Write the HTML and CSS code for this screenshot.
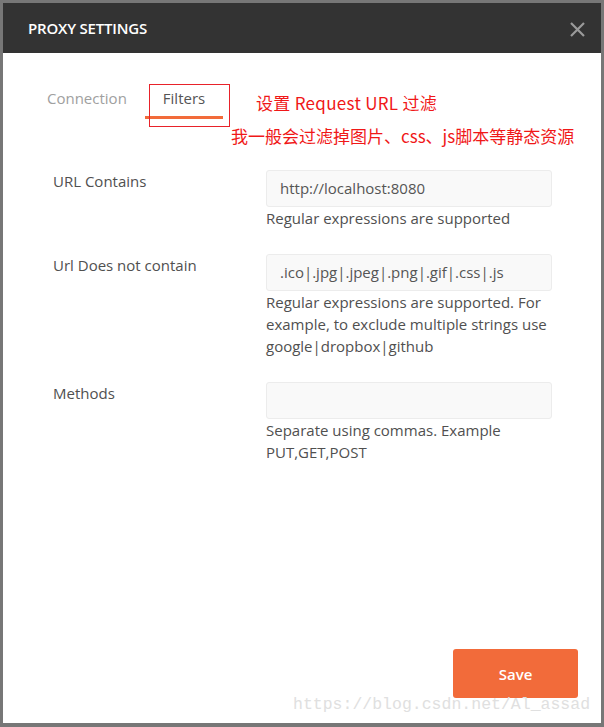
FILE: index.html
```html
<!DOCTYPE html>
<html lang="en">
<head>
    <meta charset="UTF-8">
    <title>Proxy Settings</title>
    <link rel="stylesheet" href="styles.css">
</head>
<body>
<div class="dialog">
    <header class="header">
        <span class="title">PROXY SETTINGS</span>
        <svg class="close" width="17" height="17" viewBox="0 0 17 17">
            <path d="M2 2 L15 15 M15 2 L2 15" stroke="#9a9a9a" stroke-width="2.2" fill="none"/>
        </svg>
    </header>

    <nav class="tabs">
        <div class="tab">Connection</div>
        <div class="tab active">Filters</div>
    </nav>

    <div class="form">
        <div class="label">URL Contains</div>
        <div class="field">
            <div class="input">http://localhost:8080</div>
            <div class="help">Regular expressions are supported</div>
        </div>

        <div class="label">Url Does not contain</div>
        <div class="field">
            <div class="input">.ico|.jpg|.jpeg|.png|.gif|.css|.js</div>
            <div class="help">Regular expressions are supported. For example, to exclude multiple strings use google|dropbox|github</div>
        </div>

        <div class="label">Methods</div>
        <div class="field">
            <div class="input"></div>
            <div class="help">Separate using commas. Example PUT,GET,POST</div>
        </div>
    </div>

    <footer class="footer">
        <button class="save">Save</button>
    </footer>

    <!-- annotations -->
    <div class="mark-box"></div>
    <div class="note note1">设置 Request URL 过滤</div>
    <div class="note note2">我一般会过滤掉图片、css、js脚本等静态资源</div>
    <div class="watermark">https://blog.csdn.net/Al_assad</div>
</div>
</body>
</html>
```

FILE: styles.css
```css
body {
    margin: 0;
    background-color: #777;
    font-family: "Open Sans", "Noto Sans", sans-serif;
    font-size: 15px;
    color: #505050;
}

.dialog {
    position: relative;
    margin: 3px 0 0 3px;
    width: 598px;
    height: 720px;
    background-color: #fff;
    display: flex;
    flex-direction: column;
}

.header {
    height: 50px;
    background-color: #333;
    display: flex;
    align-items: center;
    justify-content: space-between;
    padding: 0 15px 0 25px;
}
.title {
    color: #fff;
    font-size: 15px;
    font-weight: 600;
    letter-spacing: -0.2px;
}
.close {
    margin-top: 2px;
}

.tabs {
    display: flex;
    padding: 34px 0 0 26px;
}
.tab {
    line-height: 22px;
    padding: 0 18px 7px;
    border-bottom: 3px solid transparent;
    color: #a0a0a0;
}
.tab.active {
    color: #555;
    border-bottom-color: #f26b3a;
}

.form {
    display: grid;
    grid-template-columns: 213px 286px;
    row-gap: 25px;
    padding: 51px 0 0 50px;
}
.label {
    line-height: 22px;
}
.input {
    height: 35px;
    line-height: 35px;
    box-sizing: content-box;
    border: 1px solid #ececec;
    border-radius: 3px;
    background-color: #f9f9f9;
    padding: 0 13px;
    color: #555;
}
.help {
    margin-top: 0;
    line-height: 22px;
}

.footer {
    margin-top: auto;
    display: flex;
    justify-content: flex-end;
    padding: 0 23px 25px;
}
.save {
    width: 125px;
    height: 49px;
    border: none;
    border-radius: 3px;
    background-color: #f26b3a;
    color: #fff;
    font-family: "Open Sans", sans-serif;
    font-size: 15px;
    font-weight: 600;
}

.mark-box {
    position: absolute;
    left: 146px;
    top: 81px;
    width: 79px;
    height: 41px;
    border: 1px solid #e8222a;
}
.note {
    position: absolute;
    color: #f01818;
    font-family: "Noto Sans CJK SC", "Noto Sans", sans-serif;
    font-size: 17px;
    line-height: 22px;
    white-space: nowrap;
}
.note1 {
    left: 253px;
    top: 89px;
    letter-spacing: 0.3px;
}
.note2 {
    left: 228px;
    top: 122px;
}

.watermark {
    position: absolute;
    left: 290px;
    top: 692px;
    font-family: "Liberation Mono", monospace;
    font-size: 16.5px;
    color: #e0e0e0;
    white-space: nowrap;
}
```
